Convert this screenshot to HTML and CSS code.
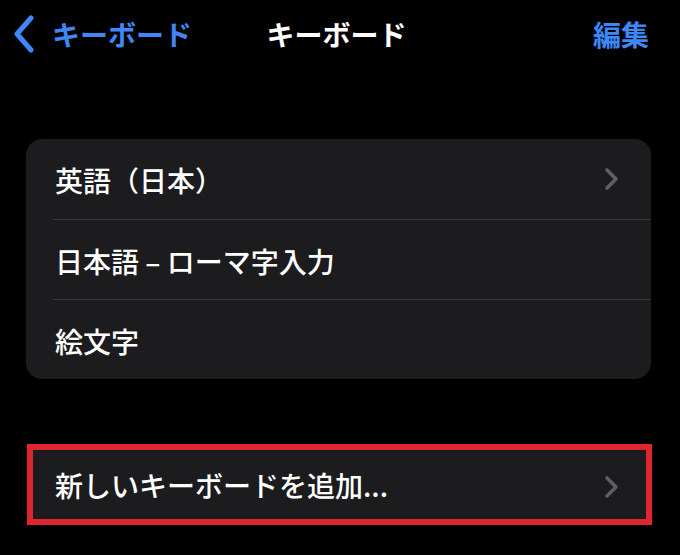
FILE: index.html
```html
<!DOCTYPE html>
<html lang="ja">
<head>
<meta charset="utf-8">
<title>キーボード</title>
<link rel="stylesheet" href="styles.css">
</head>
<body>
<header class="nav">
  <a class="back">
    <svg class="back-icon" width="24" height="38" viewBox="0 0 24 38"><polyline points="19,3 5,19 19,35" fill="none" stroke="#3f87f5" stroke-width="5" stroke-linecap="round" stroke-linejoin="round"/></svg>
    <span>キーボード</span>
  </a>
  <h1 class="title">キーボード</h1>
  <a class="edit">編集</a>
</header>

<ul class="card">
  <li class="row"><span>英語（日本）</span><svg class="chev" width="16" height="24" viewBox="0 0 16 24"><polyline points="3,3 12,12 3,21" fill="none" stroke="#5e5e62" stroke-width="3.6" stroke-linecap="round" stroke-linejoin="round"/></svg></li>
  <li class="row"><span>日本語 – ローマ字入力</span></li>
  <li class="row"><span>絵文字</span></li>
</ul>

<div class="add">
  <span>新しいキーボードを追加...</span>
  <svg class="chev" width="16" height="24" viewBox="0 0 16 24"><polyline points="3,3 12,12 3,21" fill="none" stroke="#5e5e62" stroke-width="3.6" stroke-linecap="round" stroke-linejoin="round"/></svg>
</div>
</body>
</html>
```

FILE: styles.css
```css
html, body {
  margin: 0;
  padding: 0;
  background: #000;
}
body {
  width: 680px;
  height: 555px;
  overflow: hidden;
  font-family: "Noto Sans CJK JP", "Noto Sans", sans-serif;
  color: #fff;
}
.nav {
  display: grid;
  grid-template-columns: 1fr auto 1fr;
  align-items: center;
  height: 68px;
  padding: 0 31px 0 12px;
}
.back {
  display: flex;
  align-items: center;
  gap: 16px;
  color: #3f87f5;
  font-size: 28px;
  font-weight: 700;
  line-height: 1;
}
.back-icon {
  display: block;
}
.title {
  margin: 0;
  font-size: 28px;
  font-weight: 700;
  line-height: 1;
  color: #fff;
  transform: translateX(6px);
}
.edit {
  justify-self: end;
  color: #3f87f5;
  font-size: 28px;
  font-weight: 700;
  line-height: 1;
}
.card {
  list-style: none;
  margin: 71px 0 0 26px;
  padding: 0;
  width: 625px;
  background: #1c1c1e;
  border-radius: 16px;
  overflow: hidden;
}
.row {
  position: relative;
  display: flex;
  align-items: center;
  justify-content: space-between;
  height: 80px;
  padding: 0 31px 0 29px;
  font-size: 28px;
  font-weight: 500;
  box-sizing: border-box;
}
.row + .row {
  border-top: 1px solid #38383a;
  margin-left: 27px;
  padding-left: 2px;
  height: 80px;
}
.row span {
  transform: translateY(1px);
}
.chev {
  display: block;
}
.add {
  display: flex;
  align-items: center;
  justify-content: space-between;
  margin: 65px 0 0 27px;
  width: 625px;
  height: 81px;
  box-sizing: border-box;
  border: 6px solid #de2530;
  background: #1c1c1e;
  padding: 0 26px 0 22px;
  font-size: 28px;
  font-weight: 500;
}
.add .chev {
  transform: translateY(2px);
}
```
